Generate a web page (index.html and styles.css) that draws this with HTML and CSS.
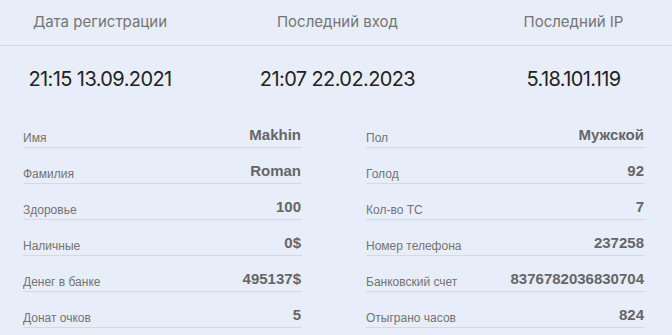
FILE: index.html
```html
<!DOCTYPE html>
<html lang="ru">
<head>
<meta charset="utf-8">
<title>Профиль</title>
<link rel="stylesheet" href="styles.css">
</head>
<body>
<div class="stats">
  <div class="stats-head">
    <div class="stat-label">Дата регистрации</div>
    <div class="stat-label">Последний вход</div>
    <div class="stat-label">Последний IP</div>
  </div>
  <div class="stats-values">
    <div class="stat-value">21:15 13.09.2021</div>
    <div class="stat-value">21:07 22.02.2023</div>
    <div class="stat-value">5.18.101.119</div>
  </div>
</div>
<div class="details">
  <div class="col">
    <div class="row"><span class="label">Имя</span><span class="value">Makhin</span></div>
    <div class="row"><span class="label">Фамилия</span><span class="value">Roman</span></div>
    <div class="row"><span class="label">Здоровье</span><span class="value">100</span></div>
    <div class="row"><span class="label">Наличные</span><span class="value">0$</span></div>
    <div class="row"><span class="label">Денег в банке</span><span class="value">495137$</span></div>
    <div class="row"><span class="label">Донат очков</span><span class="value">5</span></div>
  </div>
  <div class="col">
    <div class="row"><span class="label">Пол</span><span class="value">Мужской</span></div>
    <div class="row"><span class="label">Голод</span><span class="value">92</span></div>
    <div class="row"><span class="label">Кол-во ТС</span><span class="value">7</span></div>
    <div class="row"><span class="label">Номер телефона</span><span class="value">237258</span></div>
    <div class="row"><span class="label">Банковский счет</span><span class="value">8376782036830704</span></div>
    <div class="row"><span class="label">Отыграно часов</span><span class="value">824</span></div>
  </div>
</div>
</body>
</html>
```
FILE: styles.css
```css
html, body {
  margin: 0;
  padding: 0;
  background: #e8eef9;
}
body {
  width: 672px;
  height: 335px;
  overflow: hidden;
  font-family: "Liberation Sans", Arial, sans-serif;
}
.stats {
  font-family: Inter, "Open Sans", sans-serif;
}
.stats-head,
.stats-values {
  display: grid;
  grid-template-columns: 200px 275px 1fr;
  text-align: center;
}
.stats-head {
  height: 45px;
  align-items: center;
  border-bottom: 1px solid #d6dbe3;
}
.stat-label {
  font-size: 15px;
  color: #747474;
  padding-bottom: 2px;
}
.stats-values {
  height: 66px;
  align-items: center;
}
.stat-value {
  font-size: 20px;
  color: #222;
  letter-spacing: -0.6px;
}
.details {
  display: grid;
  grid-template-columns: 279px 279px;
  column-gap: 64px;
  padding-left: 23px;
}
.row {
  height: 35px;
  display: flex;
  justify-content: space-between;
  align-items: flex-end;
  border-bottom: 1px solid #d5d9e1;
}
.label {
  font-size: 12px;
  color: #737373;
  margin-bottom: 2px;
}
.value {
  font-size: 15px;
  font-weight: bold;
  color: #666;
  margin-bottom: 4px;
  padding-right: 1px;
}
```
